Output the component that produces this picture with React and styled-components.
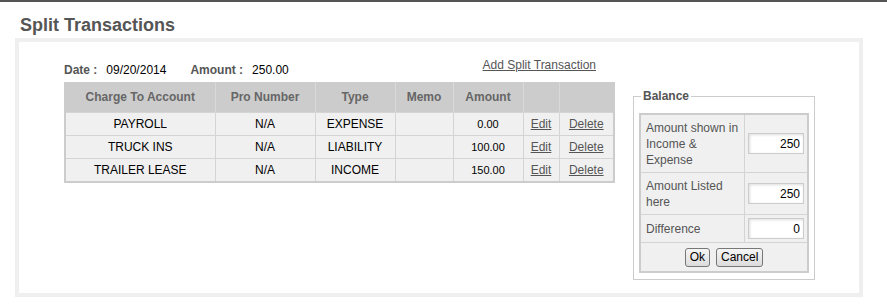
import React from "react"
import styled, { createGlobalStyle } from "styled-components"

const GlobalStyle = createGlobalStyle`
	body {
		margin: 0;
		background: #fff;
		font-family: "Liberation Sans", Arial, sans-serif;
		font-size: 12px;
		color: #000;
	}
`

const rows = [
	{ account: "PAYROLL", pro: "N/A", type: "EXPENSE", memo: "", amount: "0.00" },
	{ account: "TRUCK INS", pro: "N/A", type: "LIABILITY", memo: "", amount: "100.00" },
	{ account: "TRAILER LEASE", pro: "N/A", type: "INCOME", memo: "", amount: "150.00" },
]

const columns = [150, 100, 80, 58, 70, 36, 55]

export default function App() {
	return (
		<Page>
			<GlobalStyle />
			<Title>Split Transactions</Title>

			<Panel>
				<Main>
					<InfoBar>
						<InfoItem>
							<Label>Date :</Label>
							<span>09/20/2014</span>
						</InfoItem>
						<InfoItem>
							<Label>Amount :</Label>
							<span>250.00</span>
						</InfoItem>
						<AddLink href="#">Add Split Transaction</AddLink>
					</InfoBar>

					<SplitTable>
						<colgroup>
							{columns.map((w, i) => (
								<col key={i} style={{ width: w }} />
							))}
						</colgroup>
						<thead>
							<tr>
								<Th>Charge To Account</Th>
								<Th>Pro Number</Th>
								<Th>Type</Th>
								<Th>Memo</Th>
								<Th>Amount</Th>
								<Th />
								<Th />
							</tr>
						</thead>
						<tbody>
							{rows.map((r) => (
								<tr key={r.account}>
									<Td>{r.account}</Td>
									<Td>{r.pro}</Td>
									<Td>{r.type}</Td>
									<Td>{r.memo}</Td>
									<Td $small>{r.amount}</Td>
									<Td>
										<RowLink href="#">Edit</RowLink>
									</Td>
									<Td>
										<RowLink href="#">Delete</RowLink>
									</Td>
								</tr>
							))}
						</tbody>
					</SplitTable>
				</Main>

				<Balance>
					<Legend>Balance</Legend>
					<BalanceTable>
						<tbody>
							<tr>
								<BLabel>Amount shown in Income &amp; Expense</BLabel>
								<BValue>
									<AmountInput defaultValue="250" />
								</BValue>
							</tr>
							<tr>
								<BLabel>Amount Listed here</BLabel>
								<BValue>
									<AmountInput defaultValue="250" />
								</BValue>
							</tr>
							<tr>
								<BLabel>Difference</BLabel>
								<BValue>
									<AmountInput defaultValue="0" />
								</BValue>
							</tr>
							<tr>
								<Actions colSpan={2}>
									<Button>Ok</Button>
									<Button>Cancel</Button>
								</Actions>
							</tr>
						</tbody>
					</BalanceTable>
				</Balance>
			</Panel>
		</Page>
	)
}

const Page = styled.div`
	border-top: 2px solid #555;
	height: 303px;
`

const Title = styled.h1`
	margin: 11px 0 0 20px;
	font-size: 18px;
	line-height: 24px;
	font-weight: bold;
	color: #555;
`

const Panel = styled.div`
	margin: 1px 0 0 15px;
	height: 251px;
	border: 4px solid #efefef;
	display: flex;
	align-items: flex-start;
	gap: 20px;
	padding-left: 45px;
	box-sizing: content-box;
	width: 795px;
`

const Main = styled.div`
	width: 549px;
	padding-top: 13px;
`

const InfoBar = styled.div`
	display: flex;
	align-items: flex-end;
	height: 22px;
	padding-bottom: 5px;
`

const InfoItem = styled.div`
	display: flex;
	gap: 9px;
	margin-right: 24px;
	line-height: 14px;
`

const Label = styled.span`
	color: #555;
	font-weight: bold;
`

const AddLink = styled.a`
	margin-left: auto;
	margin-right: 17px;
	margin-bottom: 5px;
	color: #555;
	text-decoration: underline;
	line-height: 14px;
`

const SplitTable = styled.table`
	width: 549px;
	table-layout: fixed;
	border-collapse: collapse;
	border: 2px solid #ccc;
	border-top: none;
`

const Th = styled.th`
	height: 30px;
	padding: 0;
	background: #ccc;
	color: #666;
	font-weight: bold;
	text-align: center;
	border: 1px solid #d9d9d9;
	border-top: none;
	border-bottom: none;
`

const Td = styled.td`
	height: 22px;
	padding: 0;
	background: #f0f0f0;
	text-align: center;
	font-size: ${(p) => (p.$small ? "11px" : "12px")};
	border: 1px solid #d4d4d4;
`

const RowLink = styled.a`
	color: #555;
	text-decoration: underline;
`

const Balance = styled.fieldset`
	margin: 47px 0 0;
	padding: 10px 5px 6px 5px;
	width: 170px;
	border: 1px solid #ccc;
`

const Legend = styled.legend`
	padding: 0 2px;
	margin-left: 2px;
	color: #555;
	font-weight: bold;
`

const BalanceTable = styled.table`
	width: 170px;
	border-collapse: collapse;
	border: 2px solid #ccc;
	background: #f0f0f0;
`

const BLabel = styled.td`
	width: 97px;
	padding: 5px 5px 4px;
	line-height: 16px;
	color: #555;
	border: 1px solid #d4d4d4;
`

const BValue = styled.td`
	padding: 3px 3px;
	border: 1px solid #d4d4d4;
`

const AmountInput = styled.input`
	display: block;
	box-sizing: border-box;
	width: 56px;
	height: 21px;
	padding: 0 3px;
	border: 1px solid #ccc;
	background: #fff;
	box-shadow: inset 1px 1px 3px #ddd;
	text-align: right;
	font-family: "Liberation Sans", Arial, sans-serif;
	font-size: 12px;
	color: #000;
`

const Actions = styled.td`
	height: 28px;
	padding: 0;
	text-align: center;
	border: 1px solid #d4d4d4;
`

const Button = styled.button`
	height: 19px;
	padding: 0 4px;
	margin: 0 3px;
	border: 1px solid #777;
	border-radius: 3px;
	background: linear-gradient(#f6f6f6, #dcdcdc);
	font-family: "Liberation Sans", Arial, sans-serif;
	font-size: 12px;
	color: #000;
`
